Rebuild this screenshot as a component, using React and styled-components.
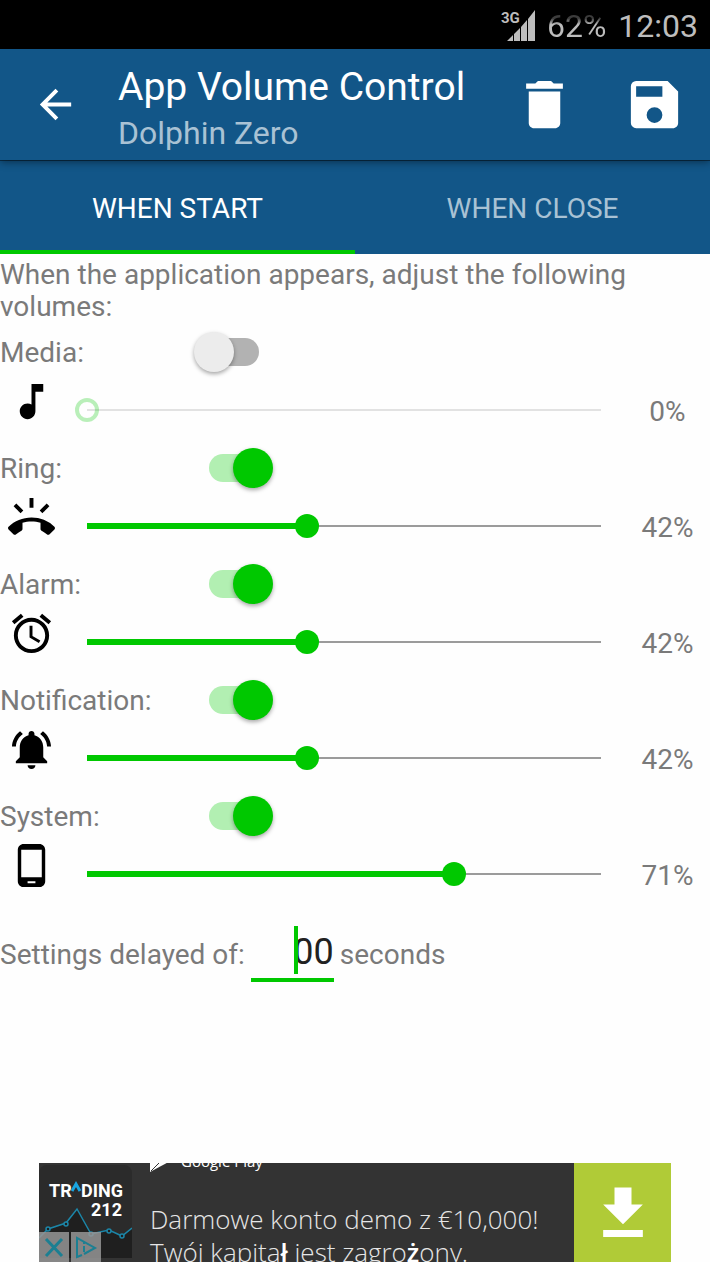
import React, { useState } from "react";
import styled, { createGlobalStyle, ThemeProvider } from "styled-components";
import {
  MdArrowBack,
  MdDelete,
  MdMusicNote,
  MdRingVolume,
  MdAccessAlarm,
} from "react-icons/md";

const theme = {
  primary: "#125688",
  accent: "#00c800",
  text: "#7a7a7a",
  fadedText: "#a9c2d4",
};

const GlobalStyle = createGlobalStyle`
  * {
    box-sizing: border-box;
  }
  body {
    margin: 0;
    background: #fefefe;
    font-family: Roboto, "Liberation Sans", sans-serif;
  }
  button, input {
    font-family: inherit;
    margin: 0;
    padding: 0;
    border: 0;
    background: none;
  }
  svg {
    display: block;
  }
`;

const Screen = styled.div`
  display: flex;
  flex-direction: column;
  min-height: 100vh;
`;

const StatusBar = styled.div`
  display: flex;
  align-items: center;
  justify-content: flex-end;
  gap: 12px;
  height: 49px;
  padding: 2px 12px 0 0;
  background: #000;
  color: #bdbdbd;
  font-size: 32px;
`;

const Battery = styled.span`
  background: linear-gradient(#3c3c3c 30%, #bdbdbd 46%);
  background-clip: text;
  color: transparent;
`;

const Toolbar = styled.header`
  position: relative;
  z-index: 1;
  display: flex;
  align-items: center;
  height: 111px;
  padding: 0 24px 0 32px;
  background: ${(p) => p.theme.primary};
  box-shadow:
    0 1px 0 rgba(0, 0, 0, 0.45),
    0 2px 8px rgba(0, 0, 0, 0.45);
  color: #fff;
`;

const IconButton = styled.button`
  color: inherit;
  margin-left: ${(p) => (p.$spaced ? "47px" : "0")};
`;

const Titles = styled.div`
  flex: 1;
  padding: 8px 0 0 39px;
`;

const Title = styled.h1`
  margin: 0;
  font-size: 39px;
  line-height: 48px;
  font-weight: 400;
`;

const Subtitle = styled.p`
  margin: 0;
  color: ${(p) => p.theme.fadedText};
  font-size: 32px;
  line-height: 44px;
`;

const Tabs = styled.div`
  display: grid;
  grid-template-columns: 1fr 1fr;
  height: 94px;
  background: ${(p) => p.theme.primary};
`;

const Tab = styled.button`
  padding-top: 6px;
  border-bottom: 4px solid
    ${(p) => (p.$isActive ? p.theme.accent : "transparent")};
  color: ${(p) => (p.$isActive ? "#fff" : p.theme.fadedText)};
  font-size: 28px;
`;

const Content = styled.main`
  padding-top: 5px;
  color: ${(p) => p.theme.text};
  font-size: 28px;
  line-height: 32px;
`;

const Intro = styled.p`
  margin: 0 0 9px;
`;

const VolumeRow = styled.section`
  height: 116px;
`;

const SwitchLine = styled.div`
  display: grid;
  grid-template-columns: 194px auto;
  justify-content: start;
  align-items: center;
  height: 40px;
`;

const StreamLabel = styled.label`
  padding-top: 2px;
`;

const Switch = styled.input`
  appearance: none;
  display: grid;
  align-items: center;
  width: 79px;
  height: 40px;

  &::before,
  &::after {
    content: "";
    grid-area: 1 / 1;
  }
  &::before {
    justify-self: center;
    width: 50px;
    height: 28px;
    border-radius: 14px;
    background: #b2b2b2;
  }
  &::after {
    width: 40px;
    height: 40px;
    border-radius: 50%;
    background: #ececec;
    box-shadow: 0 2px 4px rgba(0, 0, 0, 0.35);
  }
  &:checked::before {
    background: #b2efb2;
  }
  &:checked::after {
    justify-self: end;
    background: ${(p) => p.theme.accent};
  }
`;

const SliderLine = styled.div`
  display: grid;
  grid-template-columns: 75px 1fr 97px;
  align-items: center;
  height: 76px;
`;

const StreamIcon = styled.div`
  align-self: start;
  padding: 6px 0 0 8px;
  color: #000;
`;

const Slider = styled.input.attrs((p) => ({
  type: "range",
  style: { "--fill": p.value / p.max },
}))`
  appearance: none;
  width: 100%;
  height: 24px;

  &::-webkit-slider-runnable-track {
    height: 24px;
    background:
      linear-gradient(${(p) => p.theme.accent} 0 0) 12px 9px /
        calc((100% - 24px) * var(--fill)) 6px no-repeat,
      linear-gradient(${(p) => (p.disabled ? "#e2e2e2" : "#9b9b9b")} 0 0) 12px
        11px / calc(100% - 24px) 2px no-repeat;
  }
  &::-webkit-slider-thumb {
    appearance: none;
    width: 24px;
    height: 24px;
    border-radius: 50%;
    background: ${(p) => p.theme.accent};
  }
  &:disabled::-webkit-slider-thumb {
    border: 4px solid rgba(0, 200, 0, 0.27);
    background: none;
  }
`;

const Percent = styled.output`
  padding: 4px 0 0 12px;
  text-align: center;
`;

const DelayLine = styled.div`
  display: flex;
  align-items: baseline;
  gap: 6px;
  padding-top: 14px;
`;

const DelayField = styled.div`
  position: relative;
  width: 83px;
  border-bottom: 4px solid ${(p) => p.theme.accent};
`;

const DelayInput = styled.input`
  display: block;
  width: 100%;
  height: 52px;
  color: #212121;
  font-size: 36px;
  text-align: right;
  outline: none;
`;

const Caret = styled.span`
  position: absolute;
  top: 0;
  right: 36px;
  width: 4px;
  height: 48px;
  background: ${(p) => p.theme.accent};
`;

const Ad = styled.aside`
  display: flex;
  height: 99px;
  margin: auto 39px 0 39px;
  overflow: hidden;
  background: #333;
`;

const AdLogo = styled.div`
  position: relative;
  width: 93px;
`;

const AdChoices = styled.div`
  position: absolute;
  left: 0;
  bottom: 0;
  display: flex;
  gap: 2px;
`;

const AdChoice = styled.button`
  width: 30px;
  height: 30px;
  background: rgba(150, 150, 150, 0.85);
`;

const AdText = styled.div`
  flex: 1;
  padding-left: 18px;
  color: #e6e6e6;
  font-family: "Open Sans", "Noto Sans", sans-serif;
  font-size: 26px;
  font-weight: 300;
  line-height: 33px;
  white-space: nowrap;
`;

const PlayBadge = styled.div`
  display: flex;
  align-items: center;
  gap: 12px;
  height: 24px;
  margin: -14px 0 30px;
  color: #fff;
  font-size: 15px;
  font-weight: 400;
  line-height: 20px;
`;

const AdLine = styled.div`
  b {
    font-weight: 600;
    color: #fff;
  }
`;

const Download = styled.a`
  display: flex;
  justify-content: center;
  width: 97px;
  padding-top: 16px;
  background: #b0cb37;
  color: #fff;
`;

const Glyph = ({ d, size = 47 }) => (
  <svg width={size} height={size} viewBox="0 0 24 24" fill="currentColor">
    <path d={d} fillRule="evenodd" />
  </svg>
);

const SAVE =
  "M17 3H5a2 2 0 0 0-2 2v14a2 2 0 0 0 2 2h14c1.1 0 2-.9 2-2V7l-4-4zm-5 16a3 3 0 1 1 0-6 3 3 0 0 1 0 6zm3-10H5V5h10v4z";
const BELL =
  "M7.58 4.08L6.15 2.65C3.75 4.48 2.17 7.3 2.03 10.5h2c.15-2.65 1.51-4.97 3.55-6.42zm12.39 6.42h2c-.15-3.2-1.73-6.02-4.12-7.85l-1.42 1.43c2.02 1.45 3.39 3.77 3.54 6.42zM18 11c0-3.07-1.64-5.64-4.5-6.32V4c0-.83-.67-1.5-1.5-1.5s-1.5.67-1.5 1.5v.68C7.63 5.36 6 7.92 6 11v5l-2 2v1h16v-1l-2-2v-5zm-6 11c1.1 0 2-.9 2-2h-4c0 1.1.9 2 2 2z";
const PHONE =
  "M16 1H8C6.34 1 5 2.34 5 4v16c0 1.66 1.34 3 3 3h8c1.66 0 3-1.34 3-3V4c0-1.66-1.34-3-3-3zm-2 20h-4v-1h4v1zm3.25-3H6.75V4h10.5v14z";
const DOWNLOAD = "M19 9h-4V3H9v6H5l7 7 7-7zM5 18v2.5h14V18H5z";

const Signal = () => (
  <svg width="34" height="34" viewBox="0 0 34 34" fill="#bdbdbd">
    <text x="0" y="14" fontSize="15" fontWeight="700">
      3G
    </text>
    <path d="M6 32l6-6v6zM13 25l6-6v13h-6zM20 18l6-7v21h-6zM27 10l7-9v31h-7z" />
  </svg>
);

const TradingLogo = () => (
  <svg width="93" height="99" viewBox="0 0 93 99">
    <rect x="0" y="2" width="93" height="93" rx="8" fill="#2b2b2b" />
    <path d="M0 75l9-9 18-6 11-14 14 25 18-4 13 6 10-8v30H0z" fill="#1f1f1f" />
    <g fill="#fff" fontSize="18" fontWeight="700">
      <text x="10" y="34">
        TR
      </text>
      <text x="42" y="34">
        DING
      </text>
      <text x="52" y="53">
        212
      </text>
    </g>
    <path d="M33 28l4-7 4 7" fill="none" stroke="#19a5e0" strokeWidth="3" />
    <g fill="#1f1f1f" stroke="#1c86a8" strokeWidth="1.5">
      <path d="M0 75l9-9 18-6 11-14 14 25 18-4 13 6 10-8" fill="none" />
      <circle cx="9" cy="66" r="2" />
      <circle cx="27" cy="61" r="2" />
      <circle cx="52" cy="71" r="2" />
      <circle cx="70" cy="68" r="2" />
      <circle cx="83" cy="73" r="2" />
    </g>
  </svg>
);

const streams = [
  { name: "Media", icon: <MdMusicNote size={47} />, level: 0 },
  { name: "Ring", icon: <MdRingVolume size={47} />, level: 3 },
  { name: "Alarm", icon: <MdAccessAlarm size={47} />, level: 3 },
  { name: "Notification", icon: <Glyph d={BELL} />, level: 3 },
  { name: "System", icon: <Glyph d={PHONE} />, level: 5 },
];

const MAX_LEVEL = 7;

const Volume = ({ name, icon, level }) => {
  const [enabled, setEnabled] = useState(level > 0);
  const [value, setValue] = useState(level);
  const id = `switch-${name}`;

  return (
    <VolumeRow>
      <SwitchLine>
        <StreamLabel htmlFor={id}>{name}:</StreamLabel>
        <Switch
          id={id}
          type="checkbox"
          checked={enabled}
          onChange={(e) => setEnabled(e.target.checked)}
        />
      </SwitchLine>
      <SliderLine>
        <StreamIcon>{icon}</StreamIcon>
        <Slider
          aria-label={`${name} volume`}
          min={0}
          max={MAX_LEVEL}
          value={value}
          disabled={!enabled}
          onChange={(e) => setValue(Number(e.target.value))}
        />
        <Percent>{Math.floor((value / MAX_LEVEL) * 100)}%</Percent>
      </SliderLine>
    </VolumeRow>
  );
};

const App = () => {
  const [tab, setTab] = useState("start");
  const [delay, setDelay] = useState("00");

  return (
    <ThemeProvider theme={theme}>
      <GlobalStyle />
      <Screen>
        <StatusBar>
          <Signal />
          <Battery>62%</Battery>
          <span>12:03</span>
        </StatusBar>
        <Toolbar>
          <IconButton aria-label="Back">
            <MdArrowBack size={47} />
          </IconButton>
          <Titles>
            <Title>App Volume Control</Title>
            <Subtitle>Dolphin Zero</Subtitle>
          </Titles>
          <IconButton aria-label="Delete">
            <MdDelete size={63} />
          </IconButton>
          <IconButton aria-label="Save" $spaced>
            <Glyph d={SAVE} size={63} />
          </IconButton>
        </Toolbar>
        <Tabs role="tablist">
          <Tab
            role="tab"
            aria-selected={tab === "start"}
            $isActive={tab === "start"}
            onClick={() => setTab("start")}
          >
            WHEN START
          </Tab>
          <Tab
            role="tab"
            aria-selected={tab === "close"}
            $isActive={tab === "close"}
            onClick={() => setTab("close")}
          >
            WHEN CLOSE
          </Tab>
        </Tabs>
        <Content>
          <Intro>
            When the application appears, adjust the following volumes:
          </Intro>
          {streams.map((s) => (
            <Volume key={s.name} {...s} />
          ))}
          <DelayLine>
            <label htmlFor="delay">Settings delayed of:</label>
            <DelayField>
              <DelayInput
                id="delay"
                type="text"
                inputMode="numeric"
                value={delay}
                onChange={(e) => setDelay(e.target.value)}
              />
              <Caret />
            </DelayField>
            <span>seconds</span>
          </DelayLine>
        </Content>
        <Ad>
          <AdLogo>
            <TradingLogo />
            <AdChoices>
              <AdChoice aria-label="Close ad">
                <svg width="30" height="30" viewBox="0 0 30 30">
                  <path
                    d="M7 7l16 17M23 7L7 24"
                    stroke="#1c7f92"
                    strokeWidth="3"
                  />
                </svg>
              </AdChoice>
              <AdChoice aria-label="Ad choices">
                <svg
                  width="30"
                  height="30"
                  viewBox="0 0 30 30"
                  fill="none"
                  stroke="#1c7f92"
                  strokeWidth="2"
                >
                  <path d="M11 23l-5 2V6l18 10-11 6M13 14v6M13 10v2" />
                </svg>
              </AdChoice>
            </AdChoices>
          </AdLogo>
          <AdText>
            <PlayBadge>
              <svg width="19" height="24" viewBox="0 0 19 24" fill="#fff">
                <path d="M0 0l26 9L0 23z" />
                <path d="M1 22L13 10" stroke="#333" />
              </svg>
              Google Play
            </PlayBadge>
            <AdLine>Darmowe konto demo z €10,000!</AdLine>
            <AdLine>
              Twój kapita<b>ł</b> jest zagro<b>ż</b>ony.
            </AdLine>
          </AdText>
          <Download href="#install" aria-label="Install">
            <Glyph d={DOWNLOAD} size={68} />
          </Download>
        </Ad>
      </Screen>
    </ThemeProvider>
  );
};

export default App;
